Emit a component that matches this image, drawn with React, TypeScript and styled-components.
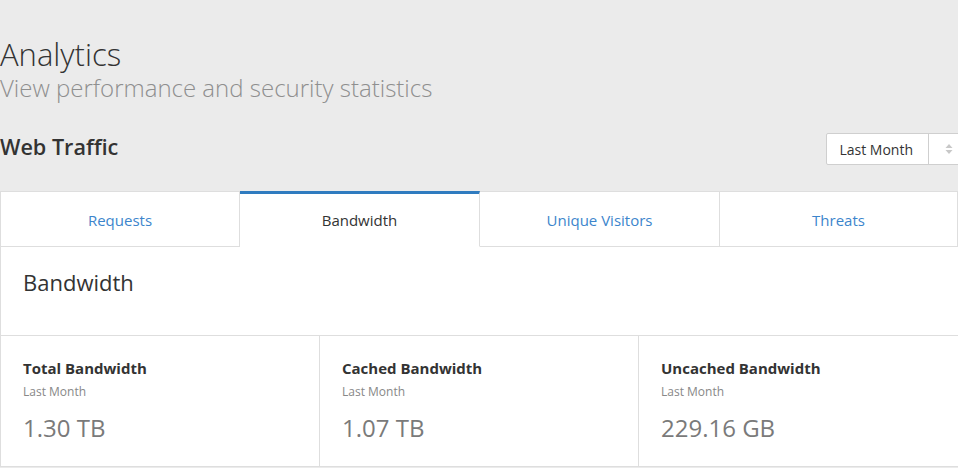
import React from 'react'
import styled, { createGlobalStyle } from 'styled-components'

const GlobalStyle = createGlobalStyle`
  html, body {
    margin: 0;
    padding: 0;
    background: #ebebeb;
    font-family: "Open Sans", "Noto Sans", sans-serif;
    color: #333;
    overflow: hidden;
  }
`

const Page = styled.div`
  width: 958px;
  padding-top: 34px;
  overflow: hidden;
`

const Title = styled.h1`
  margin: 0;
  font-size: 31px;
  font-weight: 300;
  line-height: 40px;
  color: #333;
`

const Subtitle = styled.p`
  margin: 0;
  font-size: 24px;
  font-weight: 300;
  line-height: 28px;
  color: #8f8f8f;
`

const SectionHeader = styled.div`
  display: flex;
  justify-content: space-between;
  align-items: flex-start;
  margin-top: 31px;
  height: 58px;
`

const SectionTitle = styled.h2`
  margin: 0;
  font-size: 21.6px;
  font-weight: 600;
  line-height: 28px;
  color: #333;
`

const Select = styled.div`
  display: flex;
  height: 32px;
  margin-right: -12px;
  background: #fff;
  border: 1px solid #cfcfcf;
  border-radius: 2px;
  box-sizing: border-box;
  font-size: 14px;
  color: #333;
`

const SelectLabel = styled.span`
  display: flex;
  align-items: center;
  padding: 0 15px 0 12px;
  border-right: 1px solid #cfcfcf;
`

const SelectArrows = styled.span`
  display: flex;
  align-items: center;
  justify-content: center;
  width: 40px;
`

const Card = styled.div`
  background: #fff;
  border-left: 1px solid #dedede;
`

const Tabs = styled.div`
  display: grid;
  grid-template-columns: 239px 240px 240px 1fr;
`

const Tab = styled.div<{ $active?: boolean }>`
  display: flex;
  align-items: center;
  justify-content: center;
  height: 56px;
  box-sizing: border-box;
  font-size: 15px;
  background: #fff;
  color: ${p => (p.$active ? '#333' : '#3c85cc')};
  border-top: ${p => (p.$active ? '3px solid #2f7bbf' : '1px solid #dedede')};
  border-right: 1px solid #dedede;
  border-bottom: ${p => (p.$active ? '1px solid transparent' : '1px solid #dedede')};
  padding-top: ${p => (p.$active ? '0' : '2px')};
`

const PanelHeader = styled.div`
  display: flex;
  align-items: center;
  height: 89px;
  padding: 0 22px 18px;
  box-sizing: border-box;
  border-bottom: 1px solid #dedede;
  font-size: 22px;
  color: #333;
`

const Stats = styled.div`
  display: grid;
  grid-template-columns: 319px 319px 1fr;
  border-bottom: 1px solid #dedede;
`

const Stat = styled.div`
  padding: 22px 22px 0;
  height: 130px;
  box-sizing: border-box;
  border-right: 1px solid #dedede;
  &:last-child {
    border-right: none;
  }
`

const StatLabel = styled.div`
  font-size: 15px;
  font-weight: 700;
  line-height: 20px;
  color: #333;
`

const StatPeriod = styled.div`
  margin-top: 6px;
  font-size: 12px;
  line-height: 16px;
  color: #888;
`

const StatValue = styled.div`
  margin-top: 13px;
  font-size: 24px;
  line-height: 30px;
  color: #7a7a7a;
`

const tabs = ['Requests', 'Bandwidth', 'Unique Visitors', 'Threats']

const stats = [
  { label: 'Total Bandwidth', value: '1.30 TB' },
  { label: 'Cached Bandwidth', value: '1.07 TB' },
  { label: 'Uncached Bandwidth', value: '229.16 GB' },
]

export default function App() {
  return (
    <>
      <GlobalStyle />
      <Page>
        <Title>Analytics</Title>
        <Subtitle>View performance and security statistics</Subtitle>
        <SectionHeader>
          <SectionTitle>Web Traffic</SectionTitle>
          <Select>
            <SelectLabel>Last Month</SelectLabel>
            <SelectArrows>
              <svg width="8" height="12" viewBox="0 0 8 12">
                <path d="M4 1 L7.5 5 H0.5 Z" fill="#c8c8c8" />
                <path d="M4 11 L7.5 7 H0.5 Z" fill="#c8c8c8" />
              </svg>
            </SelectArrows>
          </Select>
        </SectionHeader>
        <Card>
          <Tabs>
            {tabs.map(t => (
              <Tab key={t} $active={t === 'Bandwidth'}>{t}</Tab>
            ))}
          </Tabs>
          <PanelHeader>Bandwidth</PanelHeader>
          <Stats>
            {stats.map(s => (
              <Stat key={s.label}>
                <StatLabel>{s.label}</StatLabel>
                <StatPeriod>Last Month</StatPeriod>
                <StatValue>{s.value}</StatValue>
              </Stat>
            ))}
          </Stats>
        </Card>
      </Page>
    </>
  )
}
